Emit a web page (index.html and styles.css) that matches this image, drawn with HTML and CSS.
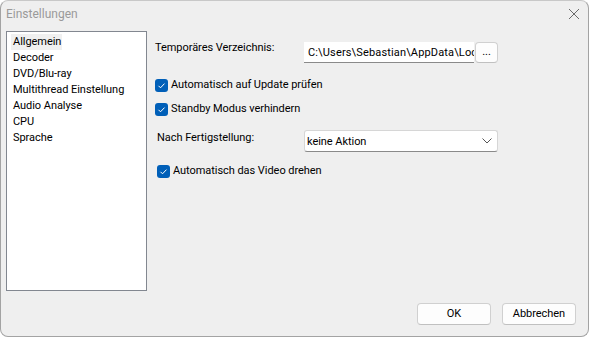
FILE: index.html
```html
<!DOCTYPE html>
<html lang="de">
<head>
<meta charset="utf-8">
<title>Einstellungen</title>
<link rel="stylesheet" href="styles.css">
</head>
<body>
<div class="window">
  <div class="titlebar">
    <span class="title">Einstellungen</span>
    <svg class="close" width="12" height="12" viewBox="0 0 12 12"><path d="M1 1L11 11M11 1L1 11" stroke="#6a6a6a" stroke-width="1" fill="none"/></svg>
  </div>
  <div class="main">
    <ul class="list">
      <li class="item selected">Allgemein</li>
      <li class="item">Decoder</li>
      <li class="item">DVD/Blu-ray</li>
      <li class="item">Multithread Einstellung</li>
      <li class="item">Audio Analyse</li>
      <li class="item">CPU</li>
      <li class="item">Sprache</li>
    </ul>
    <div class="panel">
      <div class="row row-path">
        <span class="label">Temporäres Verzeichnis:</span>
        <input class="textbox" type="text" readonly value="C:\Users\Sebastian\AppData\Local\Temp">
        <div class="btn small">...</div>
      </div>
      <div class="check check-1"><span class="box"><svg width="13" height="13" viewBox="0 0 13 13"><path d="M3.5 6.8L5.5 8.8L9.5 4.6" stroke="#fff" stroke-width="1" fill="none"/></svg></span>Automatisch auf Update prüfen</div>
      <div class="check check-2"><span class="box"><svg width="13" height="13" viewBox="0 0 13 13"><path d="M3.5 6.8L5.5 8.8L9.5 4.6" stroke="#fff" stroke-width="1" fill="none"/></svg></span>Standby Modus verhindern</div>
      <div class="row row-combo">
        <span class="label label-2">Nach Fertigstellung:</span>
        <div class="combo"><span>keine Aktion</span><svg width="10" height="6" viewBox="0 0 10 6"><path d="M0.5 0.5L5 5L9.5 0.5" stroke="#555" stroke-width="1" fill="none"/></svg></div>
      </div>
      <div class="check check-3"><span class="box"><svg width="13" height="13" viewBox="0 0 13 13"><path d="M3.5 6.8L5.5 8.8L9.5 4.6" stroke="#fff" stroke-width="1" fill="none"/></svg></span>Automatisch das Video drehen</div>
    </div>
  </div>
  <div class="footer">
    <div class="btn wide">OK</div>
    <div class="btn wide">Abbrechen</div>
  </div>
</div>
</body>
</html>
```
FILE: styles.css
```css
* { box-sizing: border-box; }
html, body { margin: 0; padding: 0; background: #ffffff; }
body {
  font-family: "Segoe UI", Roboto, sans-serif;
  font-size: 11px;
  letter-spacing: -0.05px;
  color: #000;
}
.window {
  width: 589px;
  height: 337px;
  background: #efefef;
  border: 1px solid #a3a3a3;
  border-top-color: #c8c8c8;
  border-radius: 8px;
  display: flex;
  flex-direction: column;
  overflow: hidden;
}
.titlebar {
  height: 30px;
  display: flex;
  align-items: center;
  justify-content: space-between;
  padding: 0 8px 4px 5px;
}
.title { color: #9a9a9a; font-size: 12px; letter-spacing: 0; }
.close { display: block; }
.main {
  display: flex;
  height: 260px;
  padding-left: 5px;
}
.list {
  list-style: none;
  margin: 0;
  padding: 2px 4px;
  width: 141px;
  height: 260px;
  background: #fff;
  border: 1px solid #828790;
}
.item {
  height: 16px;
  line-height: 16px;
  padding-left: 2px;
  white-space: nowrap;
}
.item.selected {
  background: #f0f0f0;
  width: fit-content;
  padding-right: 1px;
}
.panel {
  margin-left: 8px;
  padding-top: 11px;
  display: flex;
  flex-direction: column;
}
.row { display: flex; align-items: flex-start; }
.label { width: 149px; line-height: 12px; padding-top: 0px; white-space: nowrap; }
.row-path { height: 21px; }
.textbox {
  width: 170px;
  height: 21px;
  margin: 0;
  background: #fff;
  border: none;
  border-bottom: 1px solid #8a8a8a;
  padding: 0 0 0 4px;
  font: inherit;
  letter-spacing: 0.15px;
  color: #000;
  outline: none;
}
.btn {
  background: #fdfdfd;
  border: 1px solid #d0d0d0;
  border-bottom-color: #c0c0c0;
  border-radius: 4px;
  text-align: center;
  line-height: 19px;
}
.btn.small { width: 23px; height: 21px; margin-left: 1px; line-height: 17px; }
.check {
  display: flex;
  align-items: center;
  height: 16px;
  line-height: 16px;
}
.check-1 { margin-top: 14px; }
.check-2 { margin-top: 8px; }
.check-3 { margin-top: 11px; margin-left: 2px; }
.box {
  width: 13px;
  height: 13px;
  border-radius: 3px;
  background: #005fb8;
  margin-right: 3px;
  display: block;
}
.box svg { display: block; }
.row-combo { margin-top: 13px; height: 22px; }
.label-2 { margin-left: 2px; width: 147px; padding-top: 2px; }
.combo {
  width: 194px;
  height: 22px;
  background: #fff;
  border: 1px solid #d6d6d6;
  border-bottom-color: #8a8a8a;
  border-radius: 3px;
  display: flex;
  align-items: center;
  justify-content: space-between;
  padding: 0 5px 0 2px;
}
.footer {
  display: flex;
  justify-content: flex-end;
  gap: 11px;
  padding-right: 12px;
  margin-top: 12px;
}
.btn.wide { width: 74px; height: 22px; }
```
